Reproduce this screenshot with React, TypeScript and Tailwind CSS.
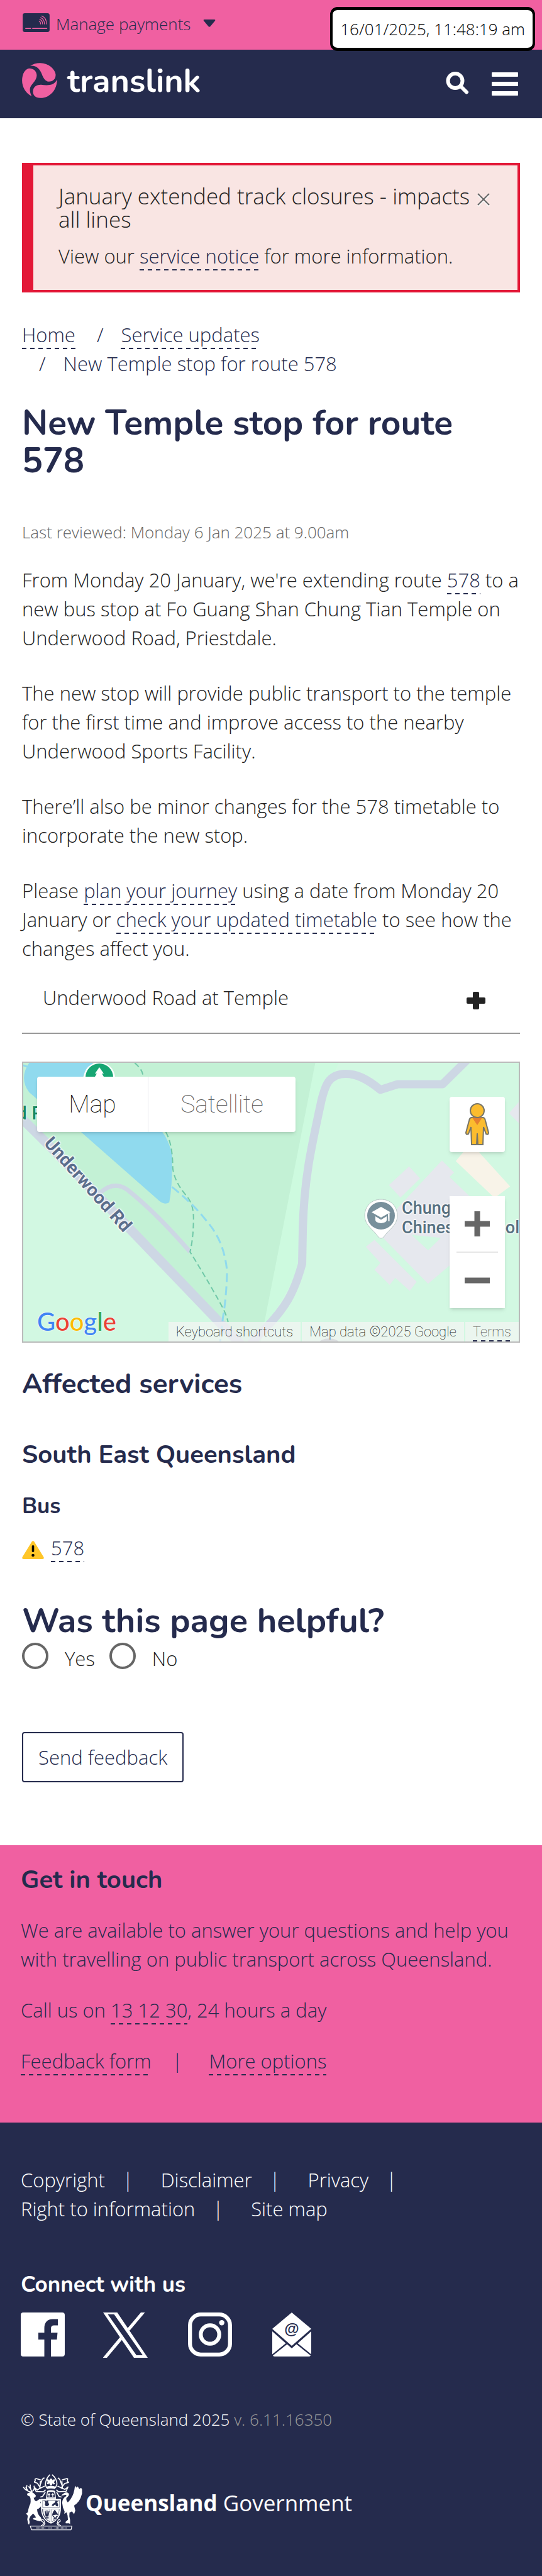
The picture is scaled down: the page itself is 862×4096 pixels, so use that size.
import React from "react";

type LinkProps = { href?: string; children: React.ReactNode };

function DashLink({ href = "#", children }: LinkProps) {
  return (
    <a
      href={href}
      className="bg-[repeating-linear-gradient(to_right,#252b4d_0_7px,transparent_7px_13px)] bg-[length:100%_2px] bg-bottom bg-no-repeat pb-0.5 text-[#252b4d]"
    >
      {children}
    </a>
  );
}

const heading = "font-['Nunito','Lato',sans-serif] font-bold text-[#252b4d]";

function CardIcon() {
  return (
    <svg viewBox="0 0 174 122" className="h-[30px] w-[43px]" aria-hidden="true">
      <rect width="174" height="122" rx="14" fill="#252b4d" />
      <g fill="none" stroke="#f060a1" strokeWidth="6" strokeLinecap="round">
        <path d="M19 99H52M64 99H156" />
        <path d="M106 51Q116 56 116 70M110 40Q128 46 129 70M116 29Q140 38 141 70M123 18Q154 30 154 70" strokeWidth="5" />
      </g>
    </svg>
  );
}

function TranslinkMark() {
  return (
    <svg viewBox="24 350 232 233" className="size-14" aria-hidden="true">
      <g fill="#f060a1">
        <path d="M78 369Q110 350 145 351C200 352 240 390 246 425C248 455 230 474 200 474C178 472 164 450 155 425C142 392 122 366 78 369Z" />
        <path d="M75 386C105 388 122 410 121 435C118 470 85 490 77 515Q72 540 87 570C50 555 24 510 24 467C24 420 46 386 75 386Z" />
        <path d="M255 460C257 520 215 582 145 582C110 582 95 560 96 538C98 505 125 494 150 495C200 500 235 500 255 460Z" />
      </g>
    </svg>
  );
}

function Header() {
  return (
    <header>
      <div className="flex h-[79px] items-start bg-[#f060a1] pt-5 pl-9">
        <button className="flex items-start text-[26px] leading-9 font-light text-[#252b4d]">
          <span className="pt-px">
            <CardIcon />
          </span>
          <span className="ml-2.5">Manage payments</span>
          <svg viewBox="0 0 20 16" className="mt-2.5 ml-5 h-4 w-5" aria-hidden="true">
            <path d="M2 1H18Q20 1 19 3L11.500 12Q10 13.500 8.500 12L1 3Q0 1 2 1Z" fill="#252b4d" />
          </svg>
        </button>
      </div>
      <div className="flex h-[109px] items-start justify-between bg-[#252b4d] pt-[21px] pr-[38px] pl-[35px]">
        <a href="#" className="flex items-start gap-4" aria-label="translink">
          <TranslinkMark />
          <span className="pt-0.5 font-['Nunito','Lato',sans-serif] text-[52px] leading-[54px] font-bold text-white">translink</span>
        </a>
        <div className="flex items-start gap-9 pt-3.5">
          <button aria-label="Search">
            <svg viewBox="0 0 37 36" className="h-9 w-[37px]" fill="none" stroke="#fff" strokeWidth="6" strokeLinecap="round">
              <circle cx="15" cy="14.500" r="11.500" />
              <path d="M24.500 24L33 32.500" />
            </svg>
          </button>
          <button aria-label="Menu" className="pt-px">
            <svg viewBox="0 0 42 37" className="h-[37px] w-[42px]" fill="#fff">
              <rect y="0" width="42" height="7" rx="1" />
              <rect y="15" width="42" height="7" rx="1" />
              <rect y="30" width="42" height="7" rx="1" />
            </svg>
          </button>
        </div>
      </div>
    </header>
  );
}

function SchoolPin() {
  return (
    <svg viewBox="0 0 54 64" className="absolute top-[216px] left-[542px] h-16 w-[54px]" aria-hidden="true">
      <path d="M27 1C12 1 1 12 1 27C1 43 16 50 22 60Q27 66 32 60C38 50 53 43 53 27C53 12 42 1 27 1Z" fill="#fff" stroke="#b9c8c6" />
      <circle cx="27" cy="27" r="22" fill="#78909c" />
      <path d="M27 13L42 21.500L27 30L12 21.500ZM18 28L27 33.500L36 28V34Q36 38 27 39Q18 38 18 34ZM38 24L40.500 22.500V36H38.500Z" fill="#fff" />
    </svg>
  );
}

function ParkPin() {
  return (
    <svg viewBox="0 0 52 52" className="absolute top-0 left-[95px] size-[52px]" aria-hidden="true">
      <circle cx="26" cy="24" r="25" fill="#fff" />
      <circle cx="26" cy="23" r="22" fill="#17a673" />
      <path d="M26 7L33 17H30L36 27H16L22 17H19Z" fill="#fff" />
    </svg>
  );
}

function MapPanel() {
  return (
    <section aria-label="Map" className="relative mt-11 h-[447px] overflow-hidden border-2 border-[#bbb] bg-[#d2f8e2] font-['Roboto',sans-serif] font-thin">
      <svg viewBox="68 73 1432 1396" preserveAspectRatio="none" className="absolute inset-0 size-full" aria-hidden="true">
        <path d="M912 73H980L930 260L874 900V1080L770 1400H755Z" fill="#cdfadf" />
        <path d="M68 73H912L765 1372L755 1469H690L68 370Z" fill="#c3f1d5" />
        <path d="M85 73Q55 150 85 220Q150 320 235 420L455 755Q475 790 490 772Q500 680 498 530Q488 460 470 420L240 143L270 73Z" fill="#90daee" />
        <g fill="#e6e8ee">
          <path d="M1183 592L1215 652L1158 748L1125 685Z" />
          <path fillRule="evenodd" d="M1278 562L1313 622L1300 645L1360 745V1000L1238 1180L1105 945L1150 800ZM1190 935L1238 1012L1275 950Z" />
          <path d="M1083 960L1205 1170L1185 1215L1143 1150L1127 1185L1083 1110L1100 1075L1058 995Z" />
          <path d="M1500 270L1472 325L1500 375Z" />
        </g>
        <path d="M1340 520L1318 565L1430 750L1475 692L1385 520Z" fill="#f8f3e8" />
        <g fill="none" stroke="#cdd7e4">
          <path d="M60 345L150 500L390 930L650 1400L700 1490" strokeWidth="15" vectorEffect="non-scaling-stroke" />
          <path d="M1350 60L1280 180H1150L1100 208C1060 150 1030 128 1000 128C950 128 940 190 930 260C900 500 880 650 876 900L874 1080C850 1230 825 1300 770 1400L725 1480" strokeWidth="13" strokeLinejoin="round" vectorEffect="non-scaling-stroke" />
          <path d="M290 725Q330 660 370 710Q450 820 550 1020" strokeWidth="7" vectorEffect="non-scaling-stroke" />
        </g>
        <g fill="none">
          <path d="M390 73Q415 110 414 143M480 420Q500 480 500 600Q505 670 540 740Q560 780 560 850Q560 950 550 1020Q600 1160 635 1270Q655 1330 660 1372" stroke="#70c8a8" strokeWidth="2" strokeDasharray="9 5" vectorEffect="non-scaling-stroke" />
          <path d="M498 695Q560 780 600 870Q650 970 657 1120Q655 1250 645 1350L637 1469M68 85L85 95" stroke="#90daee" strokeWidth="3" strokeDasharray="14 7" vectorEffect="non-scaling-stroke" />
        </g>
        <ellipse cx="952" cy="1480" rx="30" ry="26" fill="#9aa3ac" />
      </svg>

      <ParkPin />
      <SchoolPin />
      <span className="absolute top-[62px] left-[-11px] text-[30px] leading-9 font-medium text-[#188a62] [text-shadow:0_0_3px_#fff,0_0_3px_#fff]">d Park</span>
      <span className="absolute top-[175px] left-[3px] w-[200px] rotate-[48deg] text-center text-[29px] leading-9 font-bold whitespace-nowrap text-[#5b6e8c] [text-shadow:0_0_3px_#fff,0_0_3px_#fff,0_0_3px_#fff,0_0_3px_#fff]">
        Underwood Rd
      </span>
      <span className="absolute top-[216px] left-[602px] text-[27px] leading-[31px] font-medium whitespace-nowrap text-[#567080] [text-shadow:0_0_3px_#fff,0_0_3px_#fff,0_0_3px_#fff,0_0_3px_#fff]">
        Chung Tian
        <br />
        Chinese School
      </span>

      <div className="absolute top-[22px] left-[22px] flex h-[88px] rounded-sm bg-white text-[39px] shadow-md">
        <button className="w-[177px] border-r border-gray-200 text-black">Map</button>
        <button className="w-[234px] text-[#565656]">Satellite</button>
      </div>

      <button aria-label="Street View" className="absolute top-[54px] right-[22px] flex size-[88px] items-center justify-center rounded-sm bg-white shadow-md">
        <svg viewBox="0 0 38 68" className="h-[68px] w-[38px]" aria-hidden="true">
          <path d="M10 23H28Q31 23 32 28L37 47Q37 51 33 49L29 38L28 66H20L19 48L18 66H10L9 38L5 49Q1 51 1 47L6 28Q7 23 10 23Z" fill="#fbbc2e" stroke="#777568" strokeWidth="2" />
          <path d="M11 23H27L19 35Z" fill="#e58030" />
          <circle cx="19" cy="12" r="11" fill="#fbbc2e" stroke="#777568" strokeWidth="2" />
        </svg>
      </button>

      <div className="absolute top-[212px] right-[22px] flex w-[88px] flex-col items-center bg-white shadow-md">
        <button aria-label="Zoom in" className="flex h-[88px] items-center justify-center">
          <svg viewBox="0 0 40 40" className="size-10" fill="#666">
            <path d="M15.500 0H24.500V15.500H40V24.500H24.500V40H15.500V24.500H0V15.500H15.500Z" />
          </svg>
        </button>
        <div className="h-0.5 w-[66px] bg-[#e6e6e6]" />
        <button aria-label="Zoom out" className="flex h-[88px] items-center justify-center">
          <svg viewBox="0 0 40 40" className="size-10" fill="#666">
            <path d="M0 15.500H40V24.500H0Z" />
          </svg>
        </button>
      </div>

      <div className="absolute bottom-2 left-[22px] font-['Lato',sans-serif] text-[40px] leading-[48px] font-medium [text-shadow:0_0_2px_#fff,0_0_2px_#fff]">
        <span className="text-[#4285f4]">G</span>
        <span className="text-[#ea4335]">o</span>
        <span className="text-[#fbbc05]">o</span>
        <span className="text-[#4285f4]">g</span>
        <span className="text-[#34a853]">l</span>
        <span className="text-[#ea4335]">e</span>
      </div>

      <div className="absolute right-0 bottom-0 flex gap-0.5 text-[22px] leading-[31px] text-black">
        <button className="bg-[#f5f5f5]/70 px-3">Keyboard shortcuts</button>
        <span className="bg-[#f5f5f5]/70 px-3">Map data ©2025 Google</span>
        <span className="bg-[#f5f5f5]/70 px-3">
          <a href="#" className="block bg-[repeating-linear-gradient(to_right,#252b4d_0_7px,transparent_7px_13px)] bg-[length:100%_2px] bg-bottom bg-no-repeat text-[#444]">
            Terms
          </a>
        </span>
      </div>
    </section>
  );
}

function WarningIcon() {
  return (
    <svg viewBox="0 0 35 29" className="mt-3 h-[29px] w-[35px]" aria-hidden="true">
      <path d="M15.500 1.500Q17.500 -1 19.500 1.500L34.500 26Q35.500 29 32.500 29H2.500Q-0.500 29 0.500 26Z" fill="#ffc629" />
      <rect x="15.700" y="7" width="3.600" height="11" rx="1.800" />
      <circle cx="17.500" cy="23" r="2.300" />
    </svg>
  );
}

function SocialLinks() {
  return (
    <div className="mt-[23px] flex h-[70px] items-start">
      <a href="#" aria-label="Facebook">
        <svg viewBox="0 0 70 70" className="size-[70px]">
          <path fill="#fff" fillRule="evenodd" d="M4 0H66Q70 0 70 4V66Q70 70 66 70H48V43H57.500L58.500 32H48V25.500Q48 20.500 53 20.500H59V10.500H51Q37.500 11 37.500 25V32H28V43H37.500V70H4Q0 70 0 66V4Q0 0 4 0Z" />
        </svg>
      </a>
      <a href="#" aria-label="X" className="ml-[61px]">
        <svg viewBox="0 0 71 72" className="h-[72px] w-[71px]">
          <path fill="#fff" fillRule="evenodd" d="M0 0H22.500L71 72H49ZM7.500 3L53 68H63L17.500 3Z" />
          <path fill="#fff" d="M60 0H66.500L42 29L38.500 25.500ZM0 72V71.500L27 39L30 43.500L6 72Z" />
        </svg>
      </a>
      <a href="#" aria-label="Instagram" className="ml-16">
        <svg viewBox="0 0 70 70" className="size-[70px]" fill="none" stroke="#fff" strokeWidth="6.300">
          <rect x="3.200" y="3.200" width="63.600" height="63.600" rx="17" />
          <circle cx="35" cy="35" r="14.700" />
          <circle cx="53.700" cy="16.300" r="4.200" fill="#fff" stroke="none" />
        </svg>
      </a>
      <a href="#" aria-label="Email" className="ml-16">
        <svg viewBox="0 0 62 70" className="h-[70px] w-[62px]" fill="#fff">
          <path d="M31 0L62 26L31 53L0 26Z" />
          <path d="M0 30L21.500 49L0 66.500ZM62 30L40.500 49L62 66.500Z" />
          <path d="M23.500 50.500L31 57L38.500 50.500L61 68.500Q60 70 58 70H4Q2 70 1 68.500Z" />
          <text x="31" y="34" textAnchor="middle" fontFamily="Liberation Sans, sans-serif" fontSize="24" fontWeight="700" fill="#252b4d">@</text>
        </svg>
      </a>
    </div>
  );
}

function CoatOfArms() {
  return (
    <svg viewBox="12 14 398 374" className="h-[91px] w-[97px]" aria-hidden="true">
      <g fill="#fff">
        {/* deer */}
        <path d="M44 149Q40 146 60 139L72 134Q90 140 103 160L97 171L88 172Q92 190 104 196L120 186Q128 178 136 184V196Q126 204 138 212L134 232Q120 246 110 248L112 262Q116 286 134 300L142 318L128 326L112 322L86 314L84 306L104 302L92 284L84 276Q66 290 58 312L62 334L58 348L52 344L46 314L50 290L38 276L50 268Q54 234 66 212Q72 180 62 164L48 158Z" />
        {/* crane */}
        <path d="M404 118L398 108L386 116L376 98L368 106L358 94Q352 150 330 180Q318 198 310 202Q298 186 302 174Q322 160 318 146Q306 132 290 140L274 152L268 160L292 154Q306 152 300 162Q276 176 274 204Q276 236 290 262L288 278Q300 270 304 268Q312 290 312 316L296 330L298 340H320L326 346V318Q318 292 322 270L338 262L352 280L360 256Q356 240 352 224Q392 196 400 158L404 146Z" />
        {/* shield */}
        <path fillRule="evenodd" d="M134 180H266V240Q268 312 201 342Q136 316 136 240ZM146 188V238H256V188ZM144 246Q144 306 196 332V246ZM206 246V332Q256 306 256 246Z" />
        <path d="M148 190H254V236H148ZM148 248H194V328Q150 304 148 248ZM208 248H254Q254 300 208 328Z" />
        {/* helm and crest */}
        <path fillRule="evenodd" d="M176 128Q200 118 228 128L234 178H168ZM180 138L176 170H228L222 138Q200 130 180 138Z" />
        <path d="M172 56L180 50L190 58L196 48H206L212 58L222 50L228 60L220 70L228 82L218 86L212 78L206 92H196L190 78L182 86L174 80L180 68ZM172 100Q200 90 232 100L228 116Q200 108 174 116Z" />
        <rect x="186" y="142" width="5" height="24" />
        <rect x="180" y="150" width="16" height="5" />
        <rect x="210" y="142" width="5" height="24" />
        <rect x="204" y="150" width="16" height="5" />
      </g>
      <g fill="none" stroke="#fff" strokeWidth="7" strokeLinejoin="round">
        <path d="M74 136Q34 128 20 102M38 122L44 90M50 128L36 102M78 136Q62 110 66 86M66 112L54 98M80 130Q98 116 90 94" />
        <path d="M194 22Q168 48 164 84L172 108M208 22Q240 48 240 84L230 108" />
        <path d="M158 42L144 52L128 96M246 42L258 52L276 98" />
        <path d="M96 48Q102 60 92 70L112 78L132 108L112 122L94 106L104 132L152 134L166 120M134 56L100 46M312 48Q302 62 316 72L290 80L268 108L292 118L312 102L300 130L250 134L236 120M272 56L310 46" />
        <path d="M132 64L128 112L160 96M272 62L276 112L244 96M164 136L146 164L132 168M238 136L254 164L270 168" />
        <path d="M136 356Q166 340 154 318Q140 310 140 326L162 340L152 356M266 356Q236 340 248 318Q262 310 262 326L240 340L250 356" strokeWidth="5" />
        <path d="M66 358H338L332 382H74Z" strokeWidth="5" />
        <path d="M104 370H168M186 370H210M226 370H304" strokeWidth="7" strokeDasharray="4 4" />
      </g>
      <g fill="#252b4d">
        <path d="M158 192L170 196L184 190Q180 206 190 214Q184 230 168 228Q156 218 164 206ZM206 224Q210 210 224 206L232 192L250 198L240 204Q252 214 246 228Q232 230 230 216Q220 218 216 228Z" />
        <path d="M160 258H166L170 282L172 254H178L180 282L186 258H192L184 296H166ZM164 300H186V308H164ZM208 290Q210 266 226 250Q236 266 252 286Q230 278 208 290Z" />
        <path d="M216 290L242 312L238 316L212 296ZM240 290L214 312L218 316L244 296Z" />
      </g>
    </svg>
  );
}

function FooterItem({ children, last }: { children: string; last?: boolean }) {
  return (
    <li className="flex">
      <a href="#">{children}</a>
      {!last && <span className="mr-11 ml-7">|</span>}
    </li>
  );
}

export default function App() {
  return (
    <div className="relative min-h-screen bg-white font-['Open_Sans',sans-serif] text-[31px] leading-[46px] font-light text-[#222]">
      <Header />
      <div className="absolute top-[11px] right-[11px] rounded-xl border-4 border-t-[5px] border-b-[5px] border-black bg-white px-3 py-3 text-[26px] leading-9 text-black">
        16/01/2025, 11:48:19 am
      </div>

      <main className="px-[35px]">
        <div role="alert" className="mt-[71px] flex items-start border-4 border-l-[18px] border-[#e31837] bg-[#f9e5e3] pt-[30px] pr-11 pb-[31px] pl-10">
          <div className="grow">
            <h2 className="text-[35px] leading-[37px]">January extended track closures - impacts all lines</h2>
            <p className="mt-[17px]">
              View our <DashLink>service notice</DashLink> for more information.
            </p>
          </div>
          <button aria-label="Close" className="-ml-2 pt-3.5">
            <svg viewBox="0 0 20 22" className="h-[22px] w-5" fill="none" strokeWidth="2">
              <path d="M1 3L19 21M19 3L1 21" stroke="#fff" />
              <path d="M1 1L19 19M19 1L1 19" stroke="#666" />
            </svg>
          </button>
        </div>

        <nav aria-label="Breadcrumb" className="mt-11">
          <ol className="flex flex-wrap text-[#252b4d]">
            <li>
              <DashLink>Home</DashLink>
            </li>
            <li>
              <span className="px-7 pl-[34px]">/</span>
              <DashLink>Service updates</DashLink>
            </li>
            <li className="basis-full">
              <span className="px-7 pl-[27px]">/</span>
              New Temple stop for route 578
            </li>
          </ol>
        </nav>

        <h1 className={`${heading} mt-[42px] text-[55px] leading-[60px]`}>New Temple stop for route 578</h1>

        <p className="mt-[65px] text-[26px] leading-9 text-[#666]">Last reviewed: Monday 6 Jan 2025 at 9.00am</p>

        <div className="mt-[35px] flex flex-col gap-[42px]">
          <p>
            From Monday 20 January, we're extending route <DashLink>578</DashLink> to a new bus stop at Fo Guang Shan Chung Tian Temple on Underwood Road, Priestdale.
          </p>
          <p>The new stop will provide public transport to the temple for the first time and improve access to the nearby Underwood Sports Facility.</p>
          <p>There’ll also be minor changes for the 578 timetable to incorporate the new stop.</p>
          <p>
            Please <DashLink>plan your journey</DashLink> using a date from Monday 20 January or <DashLink>check your updated timetable</DashLink> to see how the changes affect you.
          </p>
        </div>

        <button className="flex w-full items-start justify-between border-b-2 border-[#999] pt-8 pr-[55px] pb-[33px] pl-[33px] text-left">
          <span>Underwood Road at Temple</span>
          <svg viewBox="0 0 30 28" className="mt-3.5 h-7 w-[30px]" fill="#222" aria-hidden="true">
            <rect x="10" width="10" height="28" rx="2" />
            <rect y="9" width="30" height="10" rx="2" />
          </svg>
        </button>

        <MapPanel />

        <h2 className={`${heading} mt-[42px] text-[44px] leading-[48px]`}>Affected services</h2>
        <h3 className={`${heading} mt-[65px] text-[40px] leading-[46px]`}>South East Queensland</h3>
        <h4 className={`${heading} mt-[38px] text-[35px] leading-[42px]`}>Bus</h4>
        <div className="mt-[22px] flex items-start gap-[11px]">
          <WarningIcon />
          <span>
            <DashLink>578</DashLink>
          </span>
        </div>

        <form className="mt-16">
          <fieldset>
            <legend className={`${heading} text-[54px] leading-[59px]`}>Was this page helpful?</legend>
            <div className="mt-[5px] flex h-12 items-start gap-[23px]">
              <label className="flex items-start gap-[26px]">
                <input type="radio" name="helpful" className="size-[42px] appearance-none rounded-full border-4 border-[#666]" />
                <span className="pt-0.5">Yes</span>
              </label>
              <label className="flex items-start gap-[26px]">
                <input type="radio" name="helpful" className="size-[42px] appearance-none rounded-full border-4 border-[#666]" />
                <span className="pt-0.5">No</span>
              </label>
            </div>
          </fieldset>
          <button type="button" className="mt-[94px] block rounded border-2 border-[#252b4d] px-6 py-[15px] text-[#252b4d]">
            Send feedback
          </button>
        </form>
      </main>

      <section className="mt-[100px] bg-[#f060a1] px-[33px] pt-8 pb-[75px] text-[#252b4d]">
        <h3 className={`${heading} text-[40px] leading-[46px]`}>Get in touch</h3>
        <p className="mt-[34px]">We are available to answer your questions and help you with travelling on public transport across Queensland.</p>
        <p className="mt-[35px]">
          Call us on <DashLink>13 12 30</DashLink>, 24 hours a day
        </p>
        <p className="mt-[35px]">
          <DashLink>Feedback form</DashLink>
          <span className="mr-[42px] ml-[33px]">|</span>
          <DashLink>More options</DashLink>
        </p>
      </section>

      <footer className="bg-[#252b4d] px-[33px] pt-[68px] pb-[73px] text-white">
        <ul className="flex flex-wrap pr-32">
          <FooterItem>Copyright</FooterItem>
          <FooterItem>Disclaimer</FooterItem>
          <FooterItem>Privacy</FooterItem>
          <FooterItem>Right to information</FooterItem>
          <FooterItem last>Site map</FooterItem>
        </ul>
        <h3 className="mt-[77px] font-['Nunito','Lato',sans-serif] text-[35px] leading-[42px] font-bold">Connect with us</h3>
        <SocialLinks />
        <p className="mt-[82px] text-[26px] leading-9">
          © State of Queensland 2025 <span className="text-[#999]">v. 6.11.16350</span>
        </p>
        <a href="#" className="mt-[68px] flex items-start pl-0.5">
          <CoatOfArms />
          <span className="ml-1 pt-5 text-[35px] leading-[54px] font-normal">
            <b className="font-bold">Queensland</b> Government
          </span>
        </a>
      </footer>
    </div>
  );
}
